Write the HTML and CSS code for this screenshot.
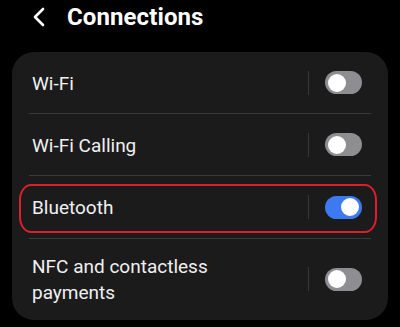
FILE: index.html
```html
<!DOCTYPE html>
<html>
<head>
<meta charset="utf-8">
<link rel="stylesheet" href="styles.css">
</head>
<body>
<header class="top">
  <svg class="back" width="14" height="20" viewBox="0 0 14 20"><path d="M11 2 L3 10 L11 18" fill="none" stroke="#fff" stroke-width="2.6" stroke-linecap="round" stroke-linejoin="round"/></svg>
  <h1 class="title">Connections</h1>
</header>
<main class="card">
  <div class="row r1">
    <span class="label">Wi-Fi</span>
    <span class="vdiv"></span>
    <span class="toggle"><span class="thumb"></span></span>
  </div>
  <div class="row r2">
    <span class="label">Wi-Fi Calling</span>
    <span class="vdiv"></span>
    <span class="toggle"><span class="thumb"></span></span>
  </div>
  <div class="row r3 highlight">
    <span class="label">Bluetooth</span>
    <span class="vdiv"></span>
    <span class="toggle on"><span class="thumb"></span></span>
  </div>
  <div class="row r4">
    <span class="label">NFC and contactless<br>payments</span>
    <span class="vdiv"></span>
    <span class="toggle"><span class="thumb"></span></span>
  </div>
</main>
</body>
</html>
```
FILE: styles.css
```css
html, body {
  margin: 0;
  padding: 0;
  background: #000;
}
body {
  width: 400px;
  height: 327px;
  overflow: hidden;
  font-family: Roboto, "Noto Sans", sans-serif;
  color: #f0f0f0;
}
.top {
  height: 52px;
  display: flex;
  align-items: flex-start;
  padding-left: 32px;
  box-sizing: border-box;
}
.back {
  margin-top: 7px;
}
.title {
  margin: 0 0 0 21px;
  font-size: 24px;
  font-weight: 700;
  line-height: 34px;
  color: #fff;
  letter-spacing: 0.1px;
}
.card {
  margin: 0 12px;
  background: #1b1b1c;
  border-radius: 22px;
  padding: 0 17px;
  height: 268px;
  box-sizing: border-box;
}
.row {
  display: flex;
  align-items: center;
  position: relative;
  border-bottom: 1px solid #3a3a3c;
}
.r1 { height: 61px; }
.r2 { height: 61px; }
.r3 { height: 62px; }
.r4 { height: 80px; border-bottom: none; }
.label {
  flex: 1;
  padding-left: 3px;
  font-size: 19px;
  line-height: 26px;
  padding-top: 2px;
}
.vdiv {
  width: 1px;
  height: 24px;
  background: #38383a;
  margin-right: 16px;
}
.toggle {
  width: 37px;
  height: 23px;
  border-radius: 12px;
  background: #8d8d92;
  margin-right: 9px;
  display: flex;
  align-items: center;
  padding: 0 3px;
  box-sizing: border-box;
}
.thumb {
  width: 18px;
  height: 18px;
  border-radius: 50%;
  background: #fff;
}
.toggle.on {
  background: #3d7af1;
  justify-content: flex-end;
}
.highlight::after {
  content: "";
  position: absolute;
  left: -10px;
  right: -6px;
  top: 8px;
  bottom: 5px;
  border: 2px solid #dc1f2a;
  border-radius: 12px / 16px;
  pointer-events: none;
}
```
